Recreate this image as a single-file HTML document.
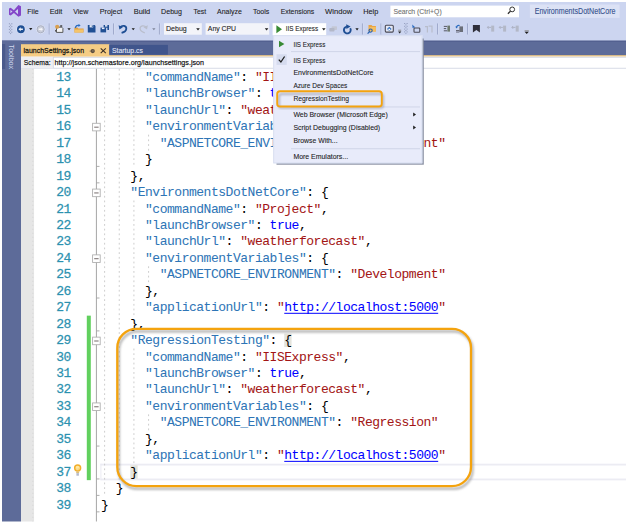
<!DOCTYPE html>
<html><head><meta charset="utf-8"><style>
html,body{margin:0;padding:0;background:#fff;width:628px;height:524px;overflow:hidden}
svg{display:block}
</style></head><body>
<svg width="628" height="524" viewBox="0 0 628 524">
<rect x="2" y="2" width="624" height="39" fill="#CCD5F0"/>
<path fill-rule="evenodd" d="M9 8.6 L10.7 7.8 L13.9 10.3 L18.4 5.1 L21 6.3 V15.6 L18.4 16.8 L13.9 12.9 L10.7 15.5 L9 14.7 Z M10.4 9.9 L12.5 11.6 L10.4 13.3 Z M18 8.9 V14.3 L15 11.6 Z" fill="#8447C9"/>
<text x="27.3" y="13.85" font-family="Liberation Sans" font-size="7.7" fill="#1E1E1E" stroke="#1E1E1E" stroke-width="0.18" stroke-opacity="0.6" textLength="11.299999999999999" lengthAdjust="spacingAndGlyphs" >File</text>
<text x="49.7" y="13.85" font-family="Liberation Sans" font-size="7.7" fill="#1E1E1E" stroke="#1E1E1E" stroke-width="0.18" stroke-opacity="0.6" textLength="12.6" lengthAdjust="spacingAndGlyphs" >Edit</text>
<text x="73.2" y="13.85" font-family="Liberation Sans" font-size="7.7" fill="#1E1E1E" stroke="#1E1E1E" stroke-width="0.18" stroke-opacity="0.6" textLength="15.1" lengthAdjust="spacingAndGlyphs" >View</text>
<text x="99.7" y="13.85" font-family="Liberation Sans" font-size="7.7" fill="#1E1E1E" stroke="#1E1E1E" stroke-width="0.18" stroke-opacity="0.6" textLength="22.6" lengthAdjust="spacingAndGlyphs" >Project</text>
<text x="133.7" y="13.85" font-family="Liberation Sans" font-size="7.7" fill="#1E1E1E" stroke="#1E1E1E" stroke-width="0.18" stroke-opacity="0.6" textLength="16.6" lengthAdjust="spacingAndGlyphs" >Build</text>
<text x="161.1" y="13.85" font-family="Liberation Sans" font-size="7.7" fill="#1E1E1E" stroke="#1E1E1E" stroke-width="0.18" stroke-opacity="0.6" textLength="20.900000000000002" lengthAdjust="spacingAndGlyphs" >Debug</text>
<text x="193.6" y="13.85" font-family="Liberation Sans" font-size="7.7" fill="#1E1E1E" stroke="#1E1E1E" stroke-width="0.18" stroke-opacity="0.6" textLength="12.6" lengthAdjust="spacingAndGlyphs" >Test</text>
<text x="217.0" y="13.85" font-family="Liberation Sans" font-size="7.7" fill="#1E1E1E" stroke="#1E1E1E" stroke-width="0.18" stroke-opacity="0.6" textLength="24.8" lengthAdjust="spacingAndGlyphs" >Analyze</text>
<text x="252.89999999999998" y="13.85" font-family="Liberation Sans" font-size="7.7" fill="#1E1E1E" stroke="#1E1E1E" stroke-width="0.18" stroke-opacity="0.6" textLength="16.400000000000002" lengthAdjust="spacingAndGlyphs" >Tools</text>
<text x="280.7" y="13.85" font-family="Liberation Sans" font-size="7.7" fill="#1E1E1E" stroke="#1E1E1E" stroke-width="0.18" stroke-opacity="0.6" textLength="33.6" lengthAdjust="spacingAndGlyphs" >Extensions</text>
<text x="325.0" y="13.85" font-family="Liberation Sans" font-size="7.7" fill="#1E1E1E" stroke="#1E1E1E" stroke-width="0.18" stroke-opacity="0.6" textLength="27.3" lengthAdjust="spacingAndGlyphs" >Window</text>
<text x="363.2" y="13.85" font-family="Liberation Sans" font-size="7.7" fill="#1E1E1E" stroke="#1E1E1E" stroke-width="0.18" stroke-opacity="0.6" textLength="15.1" lengthAdjust="spacingAndGlyphs" >Help</text>
<rect x="390.4" y="5.6" width="128.6" height="11.7" fill="#FFFFFF"/>
<text x="393.4" y="13.9" font-family="Liberation Sans" font-size="7.6" fill="#717171" stroke="#717171" stroke-width="0.18" stroke-opacity="0.6" textLength="48.3" lengthAdjust="spacingAndGlyphs" >Search (Ctrl+Q)</text>
<circle cx="512.2" cy="9.4" r="2.4" fill="none" stroke="#2A2A2A" stroke-width="0.95"/><path d="M510.5 11.1 L507.9 13.8" stroke="#2A2A2A" stroke-width="1.3"/>
<rect x="529.9" y="4.5" width="89.7" height="13.4" fill="#DCE2F5"/>
<text x="534.7" y="13.8" font-family="Liberation Sans" font-size="8.2" fill="#35508C" stroke="#35508C" stroke-width="0.18" stroke-opacity="0.6" textLength="80.8" lengthAdjust="spacingAndGlyphs" >EnvironmentsDotNetCore</text>
<rect x="8.9" y="23.3" width="1" height="1" fill="#8C96B8"/><rect x="11.3" y="23.3" width="1" height="1" fill="#8C96B8"/>
<rect x="10.1" y="24.7" width="1" height="1" fill="#8C96B8"/>
<rect x="8.9" y="26.099999999999998" width="1" height="1" fill="#8C96B8"/><rect x="11.3" y="26.099999999999998" width="1" height="1" fill="#8C96B8"/>
<rect x="10.1" y="27.499999999999996" width="1" height="1" fill="#8C96B8"/>
<rect x="8.9" y="28.899999999999995" width="1" height="1" fill="#8C96B8"/><rect x="11.3" y="28.899999999999995" width="1" height="1" fill="#8C96B8"/>
<rect x="10.1" y="30.299999999999994" width="1" height="1" fill="#8C96B8"/>
<rect x="8.9" y="31.699999999999992" width="1" height="1" fill="#8C96B8"/><rect x="11.3" y="31.699999999999992" width="1" height="1" fill="#8C96B8"/>
<rect x="10.1" y="33.099999999999994" width="1" height="1" fill="#8C96B8"/>
<circle cx="20.9" cy="29.25" r="4.6" fill="#F2F4FC" fill-opacity="0.55"/><circle cx="20.9" cy="29.25" r="3.9" fill="#1F4F94"/><path d="M18.4 29.25 L20.7 27.3 V31.2 Z M20.6 28.4 h2.3 v1.7 h-2.3z" fill="#fff" fill-opacity="0.92"/>
<path d="M29.1 28.1 h3.3 l-1.65 2.1 z" fill="#1E1E1E"/>
<circle cx="40.65" cy="29.25" r="4.6" fill="#F2F4FC" fill-opacity="0.5"/><circle cx="40.65" cy="29.25" r="3.6" fill="#C9CDDA" stroke="#A6ABBC" stroke-width="0.9"/><path d="M43 29.25 L40.8 27.4 V31.1 Z M40.9 28.5 h-2.2 v1.5 h2.2z" fill="#fff" fill-opacity="0.8"/>
<rect x="48.75" y="23.4" width="0.9" height="11.100000000000001" fill="#98A3C6"/><rect x="49.650000000000006" y="23.4" width="0.6" height="11.100000000000001" fill="#E3E8F8" fill-opacity="0.6"/>
<path d="M56.5 27.2 h5.2 l1.2 1.2 v4 h-6.4 z" fill="#F4F4F4" stroke="#4A4A4A" stroke-width="0.9"/><circle cx="57.2" cy="26.8" r="2.1" fill="#D9A050"/><rect x="60.2" y="25.2" width="2" height="1.6" fill="#4A4A4A"/><rect x="55" y="30" width="1.8" height="1.6" fill="#5A5A5A"/>
<path d="M67.4 28.2 h3.3 l-1.65 2.1 z" fill="#1E1E1E"/>
<path d="M74.4 27.6 h3 l1 1 h5.2 v3.9 h-9.2 z" fill="#E0A040"/><path d="M74.8 29.6 h8.6 l-0.4 2.9 h-8.6 z" fill="#F4C46A"/><path d="M75.4 28 C75.6 25.6 77.5 25 79.3 25.4" fill="none" stroke="#2A6BC0" stroke-width="1.3"/><path d="M78.6 24 L80.6 25.5 L78.4 26.9 Z" fill="#2A6BC0"/>
<path d="M87.8 25.1 h6.9 l0.8 0.8 v6.5 h-7.7 z" fill="#1F4F94"/><rect x="89.6" y="25.1" width="3.6" height="2.3" fill="#E6EAF7"/><rect x="91.8" y="25.4" width="0.9" height="1.6" fill="#1F4F94"/>
<path d="M103.6 25.1 h5.4 v4.9 h-1.6 v-2.2 h-3.8 z" fill="#1F4F94"/><rect x="105" y="25.1" width="2.4" height="1.5" fill="#E6EAF7"/><path d="M100.5 27.6 h5.6 v4.8 h-5.6 z" fill="#1F4F94"/><rect x="101.9" y="27.6" width="2.6" height="1.5" fill="#E6EAF7"/>
<rect x="113.14999999999999" y="23.4" width="0.9" height="11.100000000000001" fill="#98A3C6"/><rect x="114.05" y="23.4" width="0.6" height="11.100000000000001" fill="#E3E8F8" fill-opacity="0.6"/>
<path d="M120.2 27.3 C122 25 126.6 25.4 126.3 28.8 C126.1 31 123.8 32.2 121.6 32.8" fill="none" stroke="#1F4F94" stroke-width="1.8"/><path d="M118.6 25.2 L119.4 29.4 L122.9 27.2 Z" fill="#1F4F94"/>
<path d="M131.6 28.2 h3.3 l-1.65 2.1 z" fill="#1E1E1E"/>
<path d="M146.2 27.3 C144.4 25 139.8 25.4 140.1 28.8 C140.3 31 142.6 32.2 144.8 32.8" fill="none" stroke="#B9BECC" stroke-width="1.3"/><path d="M147.8 25.2 L147 29.4 L143.5 27.2 Z" fill="#B9BECC"/>
<path d="M152.2 28.2 h3.3 l-1.65 2.1 z" fill="#7E859A"/>
<rect x="158.95000000000002" y="23.4" width="0.9" height="11.100000000000001" fill="#98A3C6"/><rect x="159.85" y="23.4" width="0.6" height="11.100000000000001" fill="#E3E8F8" fill-opacity="0.6"/>
<rect x="164" y="23.2" width="37.8" height="11.5" fill="#F3F4F9"/>
<text x="166" y="31.1" font-family="Liberation Sans" font-size="7.4" fill="#1E1E1E" stroke="#1E1E1E" stroke-width="0.18" stroke-opacity="0.6" textLength="20.8" lengthAdjust="spacingAndGlyphs" >Debug</text>
<path d="M196.2 28.2 h3.6 l-1.8 2.2 z" fill="#1E1E1E"/>
<rect x="205.6" y="23.2" width="63.6" height="11.5" fill="#F3F4F9"/>
<text x="207.8" y="31.1" font-family="Liberation Sans" font-size="7.4" fill="#1E1E1E" stroke="#1E1E1E" stroke-width="0.18" stroke-opacity="0.6" textLength="28.3" lengthAdjust="spacingAndGlyphs" >Any CPU</text>
<path d="M264.8 28.2 h3.6 l-1.8 2.2 z" fill="#1E1E1E"/>
<rect x="272.6" y="23.2" width="53.6" height="12" fill="#FFFFFF"/>
<path d="M276.4 25.3 L282 29.3 L276.4 33.3 Z" fill="#388A34"/>
<text x="285.8" y="31.1" font-family="Liberation Sans" font-size="7.4" fill="#1E1E1E" stroke="#1E1E1E" stroke-width="0.18" stroke-opacity="0.6" textLength="32.4" lengthAdjust="spacingAndGlyphs" >IIS Express</text>
<path d="M322 28.2 h3.6 l-1.8 2.2 z" fill="#1E1E1E"/>
<rect x="331.6" y="26.3" width="5.4" height="3.8" rx="0.8" fill="#C3C7D4"/><rect x="329.3" y="28" width="5.2" height="3.6" rx="0.8" fill="#B3B8C8"/>
<path d="M350.2 28.2 A3.4 3.4 0 1 1 347.2 26.6" fill="none" stroke="#1F4F94" stroke-width="1.9"/><path d="M346.2 24.2 L350.6 26.4 L346.4 28.9 Z" fill="#1F4F94"/>
<path d="M355.4 28.3 h3.3 l-1.65 2.1 z" fill="#1E1E1E"/>
<rect x="361.95" y="23.4" width="0.9" height="11.100000000000001" fill="#98A3C6"/><rect x="362.84999999999997" y="23.4" width="0.6" height="11.100000000000001" fill="#E3E8F8" fill-opacity="0.6"/>
<path d="M368.5 25 h3 l1 1 h3.4 v5.5 h-7.4 z" fill="#E9A544"/><path d="M369.5 27 h6.4 v4.5 h-6.4z" fill="#F3BE63"/><circle cx="370.6" cy="30.6" r="1.6" fill="none" stroke="#2460B0" stroke-width="1.1"/><path d="M369.5 31.8 L367.6 33.6" stroke="#2460B0" stroke-width="1.2"/>
<rect x="380.55" y="23.4" width="0.9" height="11.100000000000001" fill="#98A3C6"/><rect x="381.45" y="23.4" width="0.6" height="11.100000000000001" fill="#E3E8F8" fill-opacity="0.6"/>
<rect x="385.3" y="25.3" width="8" height="6.8" rx="1" fill="#E4E8F5" stroke="#4A4A55" stroke-width="1.1"/><path d="M389.3 26.8 L391.6 29 L389.3 31 L387 29 Z" fill="#2A6BC0"/><rect x="388.4" y="28.7" width="1.8" height="1.6" fill="#fff"/>
<rect x="398.2" y="29.7" width="3" height="1" fill="#8A8A8A"/><path d="M398.1 31.4 h3.2 l-1.6 2 z" fill="#1E1E1E"/>
<rect x="404.2" y="23" width="1" height="1" fill="#8C96B8"/><rect x="406.59999999999997" y="23" width="1" height="1" fill="#8C96B8"/>
<rect x="405.4" y="24.4" width="1" height="1" fill="#8C96B8"/>
<rect x="404.2" y="25.799999999999997" width="1" height="1" fill="#8C96B8"/><rect x="406.59999999999997" y="25.799999999999997" width="1" height="1" fill="#8C96B8"/>
<rect x="405.4" y="27.199999999999996" width="1" height="1" fill="#8C96B8"/>
<rect x="404.2" y="28.599999999999994" width="1" height="1" fill="#8C96B8"/><rect x="406.59999999999997" y="28.599999999999994" width="1" height="1" fill="#8C96B8"/>
<rect x="405.4" y="29.999999999999993" width="1" height="1" fill="#8C96B8"/>
<rect x="404.2" y="31.39999999999999" width="1" height="1" fill="#8C96B8"/><rect x="406.59999999999997" y="31.39999999999999" width="1" height="1" fill="#8C96B8"/>
<rect x="405.4" y="32.79999999999999" width="1" height="1" fill="#8C96B8"/>
<path d="M412.2 24.4 L415.2 27.2 L412.6 28 Z" fill="#2A6BC0"/><rect x="414" y="28" width="5.8" height="4.2" rx="0.8" fill="none" stroke="#4A4A55" stroke-width="1.1"/>
<path d="M425 26 h3 v6.4 h-1.2 v-5.2 h-1.8z M428.6 25.5 h4 v7 h-1.2 v-5.8 h-2.8z" fill="#B8BDCB"/>
<rect x="437.15000000000003" y="23.4" width="0.9" height="11.100000000000001" fill="#98A3C6"/><rect x="438.05" y="23.4" width="0.6" height="11.100000000000001" fill="#E3E8F8" fill-opacity="0.6"/>
<path d="M443.8 26.4 h3.4 M443.8 28.6 h2.4 M443.8 30.8 h3.4" stroke="#4A4A55" stroke-width="0.9"/><rect x="447.4" y="25.6" width="2.6" height="6" fill="#6E7A6E"/>
<path d="M456.6 27.4 C456.4 25.8 458 25 459.6 25.6" fill="none" stroke="#2A6BC0" stroke-width="1.2"/><path d="M455.3 26.4 L457.9 26.8 L456.4 28.6 Z" fill="#2A6BC0"/><rect x="459.4" y="26.4" width="3.6" height="5.6" fill="#6A6E78"/><path d="M456 30.5 h3.4 M456 32 h3.4" stroke="#4A4A55" stroke-width="0.8"/>
<rect x="467.15000000000003" y="23.4" width="0.9" height="11.100000000000001" fill="#98A3C6"/><rect x="468.05" y="23.4" width="0.6" height="11.100000000000001" fill="#E3E8F8" fill-opacity="0.6"/>
<path d="M472.9 24.9 h7 v7.6 l-3.5 -2.6 l-3.5 2.6z" fill="#2F2F3A"/>
<path d="M487.4 27.4 h3.6 M488.59999999999997 26 l-1.2 1.4 l1.2 1.4" stroke="#A9AEBF" stroke-width="0.9" fill="none"/><rect x="491.2" y="25.6" width="3" height="6" fill="#B3B8C7"/>
<path d="M499.3 27.4 h3.6 M500.5 26 l-1.2 1.4 l1.2 1.4" stroke="#A9AEBF" stroke-width="0.9" fill="none"/><rect x="503.1" y="25.6" width="3" height="6" fill="#B3B8C7"/>
<path d="M511.9 27.4 h3.6 M513.1 26 l-1.2 1.4 l1.2 1.4" stroke="#A9AEBF" stroke-width="0.9" fill="none"/><rect x="515.6999999999999" y="25.6" width="3" height="6" fill="#B3B8C7"/>
<rect x="524.6" y="30.3" width="4.2" height="1" fill="#8A8A8A"/><path d="M524.6 31.8 h4.2 l-2.1 2.3 z" fill="#1E1E1E"/>
<rect x="2" y="40.7" width="624" height="15.5" fill="#5D6B99"/>
<rect x="2" y="40.7" width="624" height="0.8" fill="#4A5787"/>
<rect x="21" y="55.2" width="605" height="1.5" fill="#F5CC84"/>
<rect x="21" y="44.2" width="88.3" height="12.4" fill="#F5CC84"/>
<text x="23.5" y="52.7" font-family="Liberation Sans" font-size="7.3" fill="#101010" stroke="#101010" stroke-width="0.28" stroke-opacity="0.8" textLength="60.6" lengthAdjust="spacingAndGlyphs" >launchSettings.json</text>
<circle cx="92.7" cy="51.1" r="2.15" fill="#5A4C3E"/><circle cx="92.9" cy="50.9" r="0.8" fill="#8A7A62"/><rect x="89.6" y="50.7" width="1.6" height="0.8" fill="#7A6A58"/>
<path d="M100.7 48.3 L105.8 53.2 M105.8 48.3 L100.7 53.2" stroke="#3A3028" stroke-width="1.05"/>
<rect x="109.3" y="44.9" width="58.6" height="9.8" fill="#40558C"/>
<text x="112" y="52.6" font-family="Liberation Sans" font-size="7.5" fill="#E4E9F7" stroke="#E4E9F7" stroke-width="0.18" stroke-opacity="0.6" textLength="30.9" lengthAdjust="spacingAndGlyphs" >Startup.cs</text>
<rect x="2" y="40.7" width="19" height="481" fill="#5D6B99"/>
<rect x="2" y="44" width="3.2" height="25" fill="#4A5A8C"/>
<text transform="translate(9.2,44.6) rotate(90)" font-family="Liberation Sans" font-size="8" fill="#D3DAEE" textLength="24.5" lengthAdjust="spacingAndGlyphs" y="0">Toolbox</text>
<rect x="21" y="56.7" width="605" height="11.6" fill="#FCFCFD"/>
<rect x="21" y="56.7" width="32" height="11.6" fill="#EEEEF2"/>
<rect x="53.3" y="57.3" width="580" height="10.9" fill="#FFFFFF" stroke="#D0D4E2" stroke-width="0.8"/>
<rect x="21" y="68.1" width="605" height="0.7" fill="#D5D9E6"/>
<text x="23.8" y="65.25" font-family="Liberation Sans" font-size="7.8" fill="#101010" stroke="#101010" stroke-width="0.25" stroke-opacity="0.8" textLength="26.8" lengthAdjust="spacingAndGlyphs" >Schema:</text>
<text x="54.6" y="65.25" font-family="Liberation Sans" font-size="7.8" fill="#101010" stroke="#101010" stroke-width="0.25" stroke-opacity="0.8" textLength="149.5" lengthAdjust="spacingAndGlyphs" >http://json.schemastore.org/launchsettings.json</text>
<rect x="21" y="68.8" width="13.2" height="452.90000000000003" fill="#E6E6E6"/>
<rect x="34.2" y="68.8" width="591.8" height="452.90000000000003" fill="#FFFFFF"/>
<line x1="32.8" y1="68.8" x2="32.8" y2="521.7" stroke="#D2D2D2" stroke-width="0.8" stroke-dasharray="1 3"/>
<rect x="100.4" y="463.69999999999993" width="526" height="1.8" fill="#ECECF3"/><rect x="100.4" y="478.5499999999999" width="526" height="1.8" fill="#ECECF3"/><rect x="100.4" y="463.69999999999993" width="1" height="16.45" fill="#ECECF3"/>
<rect x="86.8" y="315.65" width="4" height="164.5" fill="#61D05E"/>
<line x1="96.4" y1="68.8" x2="96.4" y2="521.7" stroke="#A5A5A5" stroke-width="1"/>
<rect x="92.6" y="123.27499999999999" width="7.6" height="7.6" fill="#FFFFFF" stroke="#ADADAD" stroke-width="0.85"/>
<rect x="94.2" y="126.725" width="4.4" height="0.85" fill="#5E5252"/>
<rect x="92.6" y="189.075" width="7.6" height="7.6" fill="#FFFFFF" stroke="#ADADAD" stroke-width="0.85"/>
<rect x="94.2" y="192.525" width="4.4" height="0.85" fill="#5E5252"/>
<rect x="92.6" y="254.87499999999997" width="7.6" height="7.6" fill="#FFFFFF" stroke="#ADADAD" stroke-width="0.85"/>
<rect x="94.2" y="258.325" width="4.4" height="0.85" fill="#5E5252"/>
<rect x="92.6" y="337.12500000000006" width="7.6" height="7.6" fill="#FFFFFF" stroke="#ADADAD" stroke-width="0.85"/>
<rect x="94.2" y="340.57500000000005" width="4.4" height="0.85" fill="#5E5252"/>
<rect x="92.6" y="402.925" width="7.6" height="7.6" fill="#FFFFFF" stroke="#ADADAD" stroke-width="0.85"/>
<rect x="94.2" y="406.375" width="4.4" height="0.85" fill="#5E5252"/>
<line x1="96.4" y1="166.4" x2="99.5" y2="166.4" stroke="#A5A5A5" stroke-width="0.9"/>
<line x1="96.4" y1="182.85" x2="99.5" y2="182.85" stroke="#A5A5A5" stroke-width="0.9"/>
<line x1="96.4" y1="298.0" x2="99.5" y2="298.0" stroke="#A5A5A5" stroke-width="0.9"/>
<line x1="96.4" y1="330.9" x2="99.5" y2="330.9" stroke="#A5A5A5" stroke-width="0.9"/>
<line x1="96.4" y1="446.04999999999995" x2="99.5" y2="446.04999999999995" stroke="#A5A5A5" stroke-width="0.9"/>
<line x1="96.4" y1="478.94999999999993" x2="99.5" y2="478.94999999999993" stroke="#A5A5A5" stroke-width="0.9"/>
<line x1="96.4" y1="495.4" x2="99.5" y2="495.4" stroke="#A5A5A5" stroke-width="0.9"/>
<line x1="96.4" y1="511.8500000000001" x2="99.5" y2="511.8500000000001" stroke="#A5A5A5" stroke-width="0.9"/>
<line x1="104.6" y1="68.9" x2="104.6" y2="496.6" stroke="#C4C4C4" stroke-width="0.85" stroke-dasharray="1.8 2.9"/>
<line x1="119.25999999999999" y1="68.9" x2="119.25999999999999" y2="480.15" stroke="#C4C4C4" stroke-width="0.85" stroke-dasharray="1.8 2.9"/>
<line x1="133.92" y1="68.9" x2="133.92" y2="167.6" stroke="#C4C4C4" stroke-width="0.85" stroke-dasharray="1.8 2.9"/>
<line x1="133.92" y1="200.5" x2="133.92" y2="315.65" stroke="#C4C4C4" stroke-width="0.85" stroke-dasharray="1.8 2.9"/>
<line x1="133.92" y1="348.54999999999995" x2="133.92" y2="463.69999999999993" stroke="#C4C4C4" stroke-width="0.85" stroke-dasharray="1.8 2.9"/>
<line x1="148.58" y1="134.7" x2="148.58" y2="151.15" stroke="#C4C4C4" stroke-width="0.85" stroke-dasharray="1.8 2.9"/>
<line x1="148.58" y1="266.29999999999995" x2="148.58" y2="282.75" stroke="#C4C4C4" stroke-width="0.85" stroke-dasharray="1.8 2.9"/>
<line x1="148.58" y1="414.35" x2="148.58" y2="430.79999999999995" stroke="#C4C4C4" stroke-width="0.85" stroke-dasharray="1.8 2.9"/>
<rect x="284.25" y="333.6" width="7.33" height="13.45" fill="#E4E4DC"/>
<rect x="130.32" y="465.19999999999993" width="7.33" height="13.45" fill="#E4E4DC"/>
<text x="56.20 63.53" y="80.90" font-family="Liberation Mono" font-size="13" fill="#2B91AF" stroke="#2B91AF" stroke-width="0.32" stroke-opacity="0.75">13</text>
<text x="144.98 152.31 159.64 166.97 174.30 181.63 188.96 196.29 203.62 210.95 218.28 225.61 232.94" y="80.90" font-family="Liberation Mono" font-size="13" fill="#2E75B6" stroke="#2E75B6" stroke-width="0.08" stroke-opacity="0.7" xml:space="preserve">"commandName"</text>
<text x="240.27 247.60" y="80.90" font-family="Liberation Mono" font-size="13" fill="#000000" stroke="#000000" stroke-width="0.08" stroke-opacity="0.7" xml:space="preserve">: </text>
<text x="254.93 262.26 269.59 276.92 284.25 291.58 298.91 306.24 313.57 320.90 328.23 335.56" y="80.90" font-family="Liberation Mono" font-size="13" fill="#A31515" stroke="#A31515" stroke-width="0.08" stroke-opacity="0.7" xml:space="preserve">"IISExpress"</text>
<text x="342.89" y="80.90" font-family="Liberation Mono" font-size="13" fill="#000000" stroke="#000000" stroke-width="0.08" stroke-opacity="0.7" xml:space="preserve">,</text>
<text x="56.20 63.53" y="97.35" font-family="Liberation Mono" font-size="13" fill="#2B91AF" stroke="#2B91AF" stroke-width="0.32" stroke-opacity="0.75">14</text>
<text x="144.98 152.31 159.64 166.97 174.30 181.63 188.96 196.29 203.62 210.95 218.28 225.61 232.94 240.27 247.60" y="97.35" font-family="Liberation Mono" font-size="13" fill="#2E75B6" stroke="#2E75B6" stroke-width="0.08" stroke-opacity="0.7" xml:space="preserve">"launchBrowser"</text>
<text x="254.93 262.26" y="97.35" font-family="Liberation Mono" font-size="13" fill="#000000" stroke="#000000" stroke-width="0.08" stroke-opacity="0.7" xml:space="preserve">: </text>
<text x="269.59 276.92 284.25 291.58" y="97.35" font-family="Liberation Mono" font-size="13" fill="#0000FF" stroke="#0000FF" stroke-width="0.08" stroke-opacity="0.7" xml:space="preserve">true</text>
<text x="298.91" y="97.35" font-family="Liberation Mono" font-size="13" fill="#000000" stroke="#000000" stroke-width="0.08" stroke-opacity="0.7" xml:space="preserve">,</text>
<text x="56.20 63.53" y="113.80" font-family="Liberation Mono" font-size="13" fill="#2B91AF" stroke="#2B91AF" stroke-width="0.32" stroke-opacity="0.75">15</text>
<text x="144.98 152.31 159.64 166.97 174.30 181.63 188.96 196.29 203.62 210.95 218.28" y="113.80" font-family="Liberation Mono" font-size="13" fill="#2E75B6" stroke="#2E75B6" stroke-width="0.08" stroke-opacity="0.7" xml:space="preserve">"launchUrl"</text>
<text x="225.61 232.94" y="113.80" font-family="Liberation Mono" font-size="13" fill="#000000" stroke="#000000" stroke-width="0.08" stroke-opacity="0.7" xml:space="preserve">: </text>
<text x="240.27 247.60 254.93 262.26 269.59 276.92 284.25 291.58 298.91 306.24 313.57 320.90 328.23 335.56 342.89 350.22 357.55" y="113.80" font-family="Liberation Mono" font-size="13" fill="#A31515" stroke="#A31515" stroke-width="0.08" stroke-opacity="0.7" xml:space="preserve">"weatherforecast"</text>
<text x="364.88" y="113.80" font-family="Liberation Mono" font-size="13" fill="#000000" stroke="#000000" stroke-width="0.08" stroke-opacity="0.7" xml:space="preserve">,</text>
<text x="56.20 63.53" y="130.25" font-family="Liberation Mono" font-size="13" fill="#2B91AF" stroke="#2B91AF" stroke-width="0.32" stroke-opacity="0.75">16</text>
<text x="144.98 152.31 159.64 166.97 174.30 181.63 188.96 196.29 203.62 210.95 218.28 225.61 232.94 240.27 247.60 254.93 262.26 269.59 276.92 284.25 291.58 298.91" y="130.25" font-family="Liberation Mono" font-size="13" fill="#2E75B6" stroke="#2E75B6" stroke-width="0.08" stroke-opacity="0.7" xml:space="preserve">"environmentVariables"</text>
<text x="306.24 313.57 320.90" y="130.25" font-family="Liberation Mono" font-size="13" fill="#000000" stroke="#000000" stroke-width="0.08" stroke-opacity="0.7" xml:space="preserve">: {</text>
<text x="56.20 63.53" y="146.70" font-family="Liberation Mono" font-size="13" fill="#2B91AF" stroke="#2B91AF" stroke-width="0.32" stroke-opacity="0.75">17</text>
<text x="159.64 166.97 174.30 181.63 188.96 196.29 203.62 210.95 218.28 225.61 232.94 240.27 247.60 254.93 262.26 269.59 276.92 284.25 291.58 298.91 306.24 313.57 320.90 328.23" y="146.70" font-family="Liberation Mono" font-size="13" fill="#2E75B6" stroke="#2E75B6" stroke-width="0.08" stroke-opacity="0.7" xml:space="preserve">"ASPNETCORE_ENVIRONMENT"</text>
<text x="335.56 342.89" y="146.70" font-family="Liberation Mono" font-size="13" fill="#000000" stroke="#000000" stroke-width="0.08" stroke-opacity="0.7" xml:space="preserve">: </text>
<text x="350.22 357.55 364.88 372.21 379.54 386.87 394.20 401.53 408.86 416.19 423.52 430.85 438.18" y="146.70" font-family="Liberation Mono" font-size="13" fill="#A31515" stroke="#A31515" stroke-width="0.08" stroke-opacity="0.7" xml:space="preserve">"Development"</text>
<text x="56.20 63.53" y="163.15" font-family="Liberation Mono" font-size="13" fill="#2B91AF" stroke="#2B91AF" stroke-width="0.32" stroke-opacity="0.75">18</text>
<text x="144.98" y="163.15" font-family="Liberation Mono" font-size="13" fill="#000000" stroke="#000000" stroke-width="0.08" stroke-opacity="0.7" xml:space="preserve">}</text>
<text x="56.20 63.53" y="179.60" font-family="Liberation Mono" font-size="13" fill="#2B91AF" stroke="#2B91AF" stroke-width="0.32" stroke-opacity="0.75">19</text>
<text x="130.32 137.65" y="179.60" font-family="Liberation Mono" font-size="13" fill="#000000" stroke="#000000" stroke-width="0.08" stroke-opacity="0.7" xml:space="preserve">},</text>
<text x="56.20 63.53" y="196.05" font-family="Liberation Mono" font-size="13" fill="#2B91AF" stroke="#2B91AF" stroke-width="0.32" stroke-opacity="0.75">20</text>
<text x="130.32 137.65 144.98 152.31 159.64 166.97 174.30 181.63 188.96 196.29 203.62 210.95 218.28 225.61 232.94 240.27 247.60 254.93 262.26 269.59 276.92 284.25 291.58 298.91" y="196.05" font-family="Liberation Mono" font-size="13" fill="#2E75B6" stroke="#2E75B6" stroke-width="0.08" stroke-opacity="0.7" xml:space="preserve">"EnvironmentsDotNetCore"</text>
<text x="306.24 313.57 320.90" y="196.05" font-family="Liberation Mono" font-size="13" fill="#000000" stroke="#000000" stroke-width="0.08" stroke-opacity="0.7" xml:space="preserve">: {</text>
<text x="56.20 63.53" y="212.50" font-family="Liberation Mono" font-size="13" fill="#2B91AF" stroke="#2B91AF" stroke-width="0.32" stroke-opacity="0.75">21</text>
<text x="144.98 152.31 159.64 166.97 174.30 181.63 188.96 196.29 203.62 210.95 218.28 225.61 232.94" y="212.50" font-family="Liberation Mono" font-size="13" fill="#2E75B6" stroke="#2E75B6" stroke-width="0.08" stroke-opacity="0.7" xml:space="preserve">"commandName"</text>
<text x="240.27 247.60" y="212.50" font-family="Liberation Mono" font-size="13" fill="#000000" stroke="#000000" stroke-width="0.08" stroke-opacity="0.7" xml:space="preserve">: </text>
<text x="254.93 262.26 269.59 276.92 284.25 291.58 298.91 306.24 313.57" y="212.50" font-family="Liberation Mono" font-size="13" fill="#A31515" stroke="#A31515" stroke-width="0.08" stroke-opacity="0.7" xml:space="preserve">"Project"</text>
<text x="320.90" y="212.50" font-family="Liberation Mono" font-size="13" fill="#000000" stroke="#000000" stroke-width="0.08" stroke-opacity="0.7" xml:space="preserve">,</text>
<text x="56.20 63.53" y="228.95" font-family="Liberation Mono" font-size="13" fill="#2B91AF" stroke="#2B91AF" stroke-width="0.32" stroke-opacity="0.75">22</text>
<text x="144.98 152.31 159.64 166.97 174.30 181.63 188.96 196.29 203.62 210.95 218.28 225.61 232.94 240.27 247.60" y="228.95" font-family="Liberation Mono" font-size="13" fill="#2E75B6" stroke="#2E75B6" stroke-width="0.08" stroke-opacity="0.7" xml:space="preserve">"launchBrowser"</text>
<text x="254.93 262.26" y="228.95" font-family="Liberation Mono" font-size="13" fill="#000000" stroke="#000000" stroke-width="0.08" stroke-opacity="0.7" xml:space="preserve">: </text>
<text x="269.59 276.92 284.25 291.58" y="228.95" font-family="Liberation Mono" font-size="13" fill="#0000FF" stroke="#0000FF" stroke-width="0.08" stroke-opacity="0.7" xml:space="preserve">true</text>
<text x="298.91" y="228.95" font-family="Liberation Mono" font-size="13" fill="#000000" stroke="#000000" stroke-width="0.08" stroke-opacity="0.7" xml:space="preserve">,</text>
<text x="56.20 63.53" y="245.40" font-family="Liberation Mono" font-size="13" fill="#2B91AF" stroke="#2B91AF" stroke-width="0.32" stroke-opacity="0.75">23</text>
<text x="144.98 152.31 159.64 166.97 174.30 181.63 188.96 196.29 203.62 210.95 218.28" y="245.40" font-family="Liberation Mono" font-size="13" fill="#2E75B6" stroke="#2E75B6" stroke-width="0.08" stroke-opacity="0.7" xml:space="preserve">"launchUrl"</text>
<text x="225.61 232.94" y="245.40" font-family="Liberation Mono" font-size="13" fill="#000000" stroke="#000000" stroke-width="0.08" stroke-opacity="0.7" xml:space="preserve">: </text>
<text x="240.27 247.60 254.93 262.26 269.59 276.92 284.25 291.58 298.91 306.24 313.57 320.90 328.23 335.56 342.89 350.22 357.55" y="245.40" font-family="Liberation Mono" font-size="13" fill="#A31515" stroke="#A31515" stroke-width="0.08" stroke-opacity="0.7" xml:space="preserve">"weatherforecast"</text>
<text x="364.88" y="245.40" font-family="Liberation Mono" font-size="13" fill="#000000" stroke="#000000" stroke-width="0.08" stroke-opacity="0.7" xml:space="preserve">,</text>
<text x="56.20 63.53" y="261.85" font-family="Liberation Mono" font-size="13" fill="#2B91AF" stroke="#2B91AF" stroke-width="0.32" stroke-opacity="0.75">24</text>
<text x="144.98 152.31 159.64 166.97 174.30 181.63 188.96 196.29 203.62 210.95 218.28 225.61 232.94 240.27 247.60 254.93 262.26 269.59 276.92 284.25 291.58 298.91" y="261.85" font-family="Liberation Mono" font-size="13" fill="#2E75B6" stroke="#2E75B6" stroke-width="0.08" stroke-opacity="0.7" xml:space="preserve">"environmentVariables"</text>
<text x="306.24 313.57 320.90" y="261.85" font-family="Liberation Mono" font-size="13" fill="#000000" stroke="#000000" stroke-width="0.08" stroke-opacity="0.7" xml:space="preserve">: {</text>
<text x="56.20 63.53" y="278.30" font-family="Liberation Mono" font-size="13" fill="#2B91AF" stroke="#2B91AF" stroke-width="0.32" stroke-opacity="0.75">25</text>
<text x="159.64 166.97 174.30 181.63 188.96 196.29 203.62 210.95 218.28 225.61 232.94 240.27 247.60 254.93 262.26 269.59 276.92 284.25 291.58 298.91 306.24 313.57 320.90 328.23" y="278.30" font-family="Liberation Mono" font-size="13" fill="#2E75B6" stroke="#2E75B6" stroke-width="0.08" stroke-opacity="0.7" xml:space="preserve">"ASPNETCORE_ENVIRONMENT"</text>
<text x="335.56 342.89" y="278.30" font-family="Liberation Mono" font-size="13" fill="#000000" stroke="#000000" stroke-width="0.08" stroke-opacity="0.7" xml:space="preserve">: </text>
<text x="350.22 357.55 364.88 372.21 379.54 386.87 394.20 401.53 408.86 416.19 423.52 430.85 438.18" y="278.30" font-family="Liberation Mono" font-size="13" fill="#A31515" stroke="#A31515" stroke-width="0.08" stroke-opacity="0.7" xml:space="preserve">"Development"</text>
<text x="56.20 63.53" y="294.75" font-family="Liberation Mono" font-size="13" fill="#2B91AF" stroke="#2B91AF" stroke-width="0.32" stroke-opacity="0.75">26</text>
<text x="144.98 152.31" y="294.75" font-family="Liberation Mono" font-size="13" fill="#000000" stroke="#000000" stroke-width="0.08" stroke-opacity="0.7" xml:space="preserve">},</text>
<text x="56.20 63.53" y="311.20" font-family="Liberation Mono" font-size="13" fill="#2B91AF" stroke="#2B91AF" stroke-width="0.32" stroke-opacity="0.75">27</text>
<text x="144.98 152.31 159.64 166.97 174.30 181.63 188.96 196.29 203.62 210.95 218.28 225.61 232.94 240.27 247.60 254.93" y="311.20" font-family="Liberation Mono" font-size="13" fill="#2E75B6" stroke="#2E75B6" stroke-width="0.08" stroke-opacity="0.7" xml:space="preserve">"applicationUrl"</text>
<text x="262.26 269.59" y="311.20" font-family="Liberation Mono" font-size="13" fill="#000000" stroke="#000000" stroke-width="0.08" stroke-opacity="0.7" xml:space="preserve">: </text>
<text x="276.92" y="311.20" font-family="Liberation Mono" font-size="13" fill="#A31515" stroke="#A31515" stroke-width="0.08" stroke-opacity="0.7" xml:space="preserve">"</text>
<text x="284.25 291.58 298.91 306.24 313.57 320.90 328.23 335.56 342.89 350.22 357.55 364.88 372.21 379.54 386.87 394.20 401.53 408.86 416.19 423.52 430.85" y="311.20" font-family="Liberation Mono" font-size="13" fill="#0000FF" stroke="#0000FF" stroke-width="0.08" stroke-opacity="0.7" xml:space="preserve">http://localhost:5000</text>
<rect x="284.25" y="312.80" width="153.93" height="1" fill="#0000FF"/>
<text x="438.18" y="311.20" font-family="Liberation Mono" font-size="13" fill="#A31515" stroke="#A31515" stroke-width="0.08" stroke-opacity="0.7" xml:space="preserve">"</text>
<text x="56.20 63.53" y="327.65" font-family="Liberation Mono" font-size="13" fill="#2B91AF" stroke="#2B91AF" stroke-width="0.32" stroke-opacity="0.75">28</text>
<text x="130.32 137.65" y="327.65" font-family="Liberation Mono" font-size="13" fill="#000000" stroke="#000000" stroke-width="0.08" stroke-opacity="0.7" xml:space="preserve">},</text>
<text x="56.20 63.53" y="344.10" font-family="Liberation Mono" font-size="13" fill="#2B91AF" stroke="#2B91AF" stroke-width="0.32" stroke-opacity="0.75">29</text>
<text x="130.32 137.65 144.98 152.31 159.64 166.97 174.30 181.63 188.96 196.29 203.62 210.95 218.28 225.61 232.94 240.27 247.60 254.93 262.26" y="344.10" font-family="Liberation Mono" font-size="13" fill="#2E75B6" stroke="#2E75B6" stroke-width="0.08" stroke-opacity="0.7" xml:space="preserve">"RegressionTesting"</text>
<text x="269.59 276.92" y="344.10" font-family="Liberation Mono" font-size="13" fill="#000000" stroke="#000000" stroke-width="0.08" stroke-opacity="0.7" xml:space="preserve">: </text>
<text x="284.25" y="344.10" font-family="Liberation Mono" font-size="13" fill="#000000" stroke="#000000" stroke-width="0.08" stroke-opacity="0.7" xml:space="preserve">{</text>
<text x="56.20 63.53" y="360.55" font-family="Liberation Mono" font-size="13" fill="#2B91AF" stroke="#2B91AF" stroke-width="0.32" stroke-opacity="0.75">30</text>
<text x="144.98 152.31 159.64 166.97 174.30 181.63 188.96 196.29 203.62 210.95 218.28 225.61 232.94" y="360.55" font-family="Liberation Mono" font-size="13" fill="#2E75B6" stroke="#2E75B6" stroke-width="0.08" stroke-opacity="0.7" xml:space="preserve">"commandName"</text>
<text x="240.27 247.60" y="360.55" font-family="Liberation Mono" font-size="13" fill="#000000" stroke="#000000" stroke-width="0.08" stroke-opacity="0.7" xml:space="preserve">: </text>
<text x="254.93 262.26 269.59 276.92 284.25 291.58 298.91 306.24 313.57 320.90 328.23 335.56" y="360.55" font-family="Liberation Mono" font-size="13" fill="#A31515" stroke="#A31515" stroke-width="0.08" stroke-opacity="0.7" xml:space="preserve">"IISExpress"</text>
<text x="342.89" y="360.55" font-family="Liberation Mono" font-size="13" fill="#000000" stroke="#000000" stroke-width="0.08" stroke-opacity="0.7" xml:space="preserve">,</text>
<text x="56.20 63.53" y="377.00" font-family="Liberation Mono" font-size="13" fill="#2B91AF" stroke="#2B91AF" stroke-width="0.32" stroke-opacity="0.75">31</text>
<text x="144.98 152.31 159.64 166.97 174.30 181.63 188.96 196.29 203.62 210.95 218.28 225.61 232.94 240.27 247.60" y="377.00" font-family="Liberation Mono" font-size="13" fill="#2E75B6" stroke="#2E75B6" stroke-width="0.08" stroke-opacity="0.7" xml:space="preserve">"launchBrowser"</text>
<text x="254.93 262.26" y="377.00" font-family="Liberation Mono" font-size="13" fill="#000000" stroke="#000000" stroke-width="0.08" stroke-opacity="0.7" xml:space="preserve">: </text>
<text x="269.59 276.92 284.25 291.58" y="377.00" font-family="Liberation Mono" font-size="13" fill="#0000FF" stroke="#0000FF" stroke-width="0.08" stroke-opacity="0.7" xml:space="preserve">true</text>
<text x="298.91" y="377.00" font-family="Liberation Mono" font-size="13" fill="#000000" stroke="#000000" stroke-width="0.08" stroke-opacity="0.7" xml:space="preserve">,</text>
<text x="56.20 63.53" y="393.45" font-family="Liberation Mono" font-size="13" fill="#2B91AF" stroke="#2B91AF" stroke-width="0.32" stroke-opacity="0.75">32</text>
<text x="144.98 152.31 159.64 166.97 174.30 181.63 188.96 196.29 203.62 210.95 218.28" y="393.45" font-family="Liberation Mono" font-size="13" fill="#2E75B6" stroke="#2E75B6" stroke-width="0.08" stroke-opacity="0.7" xml:space="preserve">"launchUrl"</text>
<text x="225.61 232.94" y="393.45" font-family="Liberation Mono" font-size="13" fill="#000000" stroke="#000000" stroke-width="0.08" stroke-opacity="0.7" xml:space="preserve">: </text>
<text x="240.27 247.60 254.93 262.26 269.59 276.92 284.25 291.58 298.91 306.24 313.57 320.90 328.23 335.56 342.89 350.22 357.55" y="393.45" font-family="Liberation Mono" font-size="13" fill="#A31515" stroke="#A31515" stroke-width="0.08" stroke-opacity="0.7" xml:space="preserve">"weatherforecast"</text>
<text x="364.88" y="393.45" font-family="Liberation Mono" font-size="13" fill="#000000" stroke="#000000" stroke-width="0.08" stroke-opacity="0.7" xml:space="preserve">,</text>
<text x="56.20 63.53" y="409.90" font-family="Liberation Mono" font-size="13" fill="#2B91AF" stroke="#2B91AF" stroke-width="0.32" stroke-opacity="0.75">33</text>
<text x="144.98 152.31 159.64 166.97 174.30 181.63 188.96 196.29 203.62 210.95 218.28 225.61 232.94 240.27 247.60 254.93 262.26 269.59 276.92 284.25 291.58 298.91" y="409.90" font-family="Liberation Mono" font-size="13" fill="#2E75B6" stroke="#2E75B6" stroke-width="0.08" stroke-opacity="0.7" xml:space="preserve">"environmentVariables"</text>
<text x="306.24 313.57 320.90" y="409.90" font-family="Liberation Mono" font-size="13" fill="#000000" stroke="#000000" stroke-width="0.08" stroke-opacity="0.7" xml:space="preserve">: {</text>
<text x="56.20 63.53" y="426.35" font-family="Liberation Mono" font-size="13" fill="#2B91AF" stroke="#2B91AF" stroke-width="0.32" stroke-opacity="0.75">34</text>
<text x="159.64 166.97 174.30 181.63 188.96 196.29 203.62 210.95 218.28 225.61 232.94 240.27 247.60 254.93 262.26 269.59 276.92 284.25 291.58 298.91 306.24 313.57 320.90 328.23" y="426.35" font-family="Liberation Mono" font-size="13" fill="#2E75B6" stroke="#2E75B6" stroke-width="0.08" stroke-opacity="0.7" xml:space="preserve">"ASPNETCORE_ENVIRONMENT"</text>
<text x="335.56 342.89" y="426.35" font-family="Liberation Mono" font-size="13" fill="#000000" stroke="#000000" stroke-width="0.08" stroke-opacity="0.7" xml:space="preserve">: </text>
<text x="350.22 357.55 364.88 372.21 379.54 386.87 394.20 401.53 408.86 416.19 423.52 430.85" y="426.35" font-family="Liberation Mono" font-size="13" fill="#A31515" stroke="#A31515" stroke-width="0.08" stroke-opacity="0.7" xml:space="preserve">"Regression"</text>
<text x="56.20 63.53" y="442.80" font-family="Liberation Mono" font-size="13" fill="#2B91AF" stroke="#2B91AF" stroke-width="0.32" stroke-opacity="0.75">35</text>
<text x="144.98 152.31" y="442.80" font-family="Liberation Mono" font-size="13" fill="#000000" stroke="#000000" stroke-width="0.08" stroke-opacity="0.7" xml:space="preserve">},</text>
<text x="56.20 63.53" y="459.25" font-family="Liberation Mono" font-size="13" fill="#2B91AF" stroke="#2B91AF" stroke-width="0.32" stroke-opacity="0.75">36</text>
<text x="144.98 152.31 159.64 166.97 174.30 181.63 188.96 196.29 203.62 210.95 218.28 225.61 232.94 240.27 247.60 254.93" y="459.25" font-family="Liberation Mono" font-size="13" fill="#2E75B6" stroke="#2E75B6" stroke-width="0.08" stroke-opacity="0.7" xml:space="preserve">"applicationUrl"</text>
<text x="262.26 269.59" y="459.25" font-family="Liberation Mono" font-size="13" fill="#000000" stroke="#000000" stroke-width="0.08" stroke-opacity="0.7" xml:space="preserve">: </text>
<text x="276.92" y="459.25" font-family="Liberation Mono" font-size="13" fill="#A31515" stroke="#A31515" stroke-width="0.08" stroke-opacity="0.7" xml:space="preserve">"</text>
<text x="284.25 291.58 298.91 306.24 313.57 320.90 328.23 335.56 342.89 350.22 357.55 364.88 372.21 379.54 386.87 394.20 401.53 408.86 416.19 423.52 430.85" y="459.25" font-family="Liberation Mono" font-size="13" fill="#0000FF" stroke="#0000FF" stroke-width="0.08" stroke-opacity="0.7" xml:space="preserve">http://localhost:5000</text>
<rect x="284.25" y="460.85" width="153.93" height="1" fill="#0000FF"/>
<text x="438.18" y="459.25" font-family="Liberation Mono" font-size="13" fill="#A31515" stroke="#A31515" stroke-width="0.08" stroke-opacity="0.7" xml:space="preserve">"</text>
<text x="56.20 63.53" y="475.70" font-family="Liberation Mono" font-size="13" fill="#2B91AF" stroke="#2B91AF" stroke-width="0.32" stroke-opacity="0.75">37</text>
<text x="130.32" y="475.70" font-family="Liberation Mono" font-size="13" fill="#000000" stroke="#000000" stroke-width="0.08" stroke-opacity="0.7" xml:space="preserve">}</text>
<text x="56.20 63.53" y="492.15" font-family="Liberation Mono" font-size="13" fill="#2B91AF" stroke="#2B91AF" stroke-width="0.32" stroke-opacity="0.75">38</text>
<text x="115.66" y="492.15" font-family="Liberation Mono" font-size="13" fill="#000000" stroke="#000000" stroke-width="0.08" stroke-opacity="0.7" xml:space="preserve">}</text>
<text x="56.20 63.53" y="508.60" font-family="Liberation Mono" font-size="13" fill="#2B91AF" stroke="#2B91AF" stroke-width="0.32" stroke-opacity="0.75">39</text>
<text x="101.00" y="508.60" font-family="Liberation Mono" font-size="13" fill="#000000" stroke="#000000" stroke-width="0.08" stroke-opacity="0.7" xml:space="preserve">}</text>
<circle cx="77.65" cy="468.025" r="2.95" fill="#FFE7A0" stroke="#F2AE2A" stroke-width="1.5"/><path d="M76.9 468.32499999999993 v2.4 M78.4 468.32499999999993 v2.4" stroke="#F5C55A" stroke-width="0.6"/><rect x="76.2" y="471.525" width="2.9" height="1.6" fill="#D9BE7C"/><rect x="76.4" y="473.12499999999994" width="2.5" height="2.6" fill="#B4B9CC"/>
<filter id="sh" x="-10%" y="-10%" width="120%" height="120%"><feGaussianBlur stdDeviation="1.2"/></filter>
<filter id="sh3" x="-10%" y="-10%" width="120%" height="120%"><feGaussianBlur stdDeviation="0.9"/></filter>
<rect x="118.8" y="331.4" width="353.7" height="157.4" rx="19" ry="19" fill="none" stroke="#8A8A8A" stroke-opacity="0.6" stroke-width="2.6" filter="url(#sh3)"/>
<rect x="117.3" y="328.8" width="353.7" height="157.3" rx="19" ry="19" fill="none" stroke="#F4A30E" stroke-width="2.3"/>
<filter id="sh2" x="-10%" y="-10%" width="125%" height="125%"><feGaussianBlur stdDeviation="0.45"/></filter>
<rect x="276.5" y="38.5" width="147.3" height="126.2" fill="#8A91A3" filter="url(#sh2)"/>
<rect x="273.2" y="35.2" width="149.2" height="128.2" fill="#E8EBFA"/>
<rect x="273.7" y="35.7" width="148.2" height="127.2" fill="none" stroke="#D8DEF0" stroke-width="0.9"/>
<path d="M279 40.7 L284.4 44 L279 47.3 Z" fill="#388A34"/>
<rect x="291" y="51.2" width="129" height="0.9" fill="#CDD3E6"/>
<rect x="291" y="106.5" width="129" height="0.9" fill="#CDD3E6"/>
<rect x="291" y="148.3" width="129" height="0.9" fill="#CDD3E6"/>
<rect x="276.5" y="54.3" width="10.2" height="10.6" fill="#D5DBEE"/>
<path d="M278.8 59.6 L280.9 62 L284.6 56.5" fill="none" stroke="#1E1E1E" stroke-width="1.3"/>
<text x="293.4" y="46.7" font-family="Liberation Sans" font-size="7.7" fill="#1E1E1E" stroke="#1E1E1E" stroke-width="0.18" stroke-opacity="0.6" textLength="31.9" lengthAdjust="spacingAndGlyphs" >IIS Express</text>
<text x="293.4" y="62.5" font-family="Liberation Sans" font-size="7.7" fill="#1E1E1E" stroke="#1E1E1E" stroke-width="0.18" stroke-opacity="0.6" textLength="31.9" lengthAdjust="spacingAndGlyphs" >IIS Express</text>
<text x="293.4" y="75.3" font-family="Liberation Sans" font-size="7.7" fill="#1E1E1E" stroke="#1E1E1E" stroke-width="0.18" stroke-opacity="0.6" textLength="80" lengthAdjust="spacingAndGlyphs" >EnvironmentsDotNetCore</text>
<text x="293.4" y="87.9" font-family="Liberation Sans" font-size="7.7" fill="#1E1E1E" stroke="#1E1E1E" stroke-width="0.18" stroke-opacity="0.6" textLength="53.9" lengthAdjust="spacingAndGlyphs" >Azure Dev Spaces</text>
<text x="293.4" y="101.4" font-family="Liberation Sans" font-size="7.7" fill="#1E1E1E" stroke="#1E1E1E" stroke-width="0.18" stroke-opacity="0.6" textLength="55.5" lengthAdjust="spacingAndGlyphs" >RegressionTesting</text>
<text x="293.4" y="117.4" font-family="Liberation Sans" font-size="7.7" fill="#1E1E1E" stroke="#1E1E1E" stroke-width="0.18" stroke-opacity="0.6" textLength="94.4" lengthAdjust="spacingAndGlyphs" >Web Browser (Microsoft Edge)</text>
<text x="293.4" y="130.1" font-family="Liberation Sans" font-size="7.7" fill="#1E1E1E" stroke="#1E1E1E" stroke-width="0.18" stroke-opacity="0.6" textLength="86.8" lengthAdjust="spacingAndGlyphs" >Script Debugging (Disabled)</text>
<text x="293.4" y="142.9" font-family="Liberation Sans" font-size="7.7" fill="#1E1E1E" stroke="#1E1E1E" stroke-width="0.18" stroke-opacity="0.6" textLength="44.2" lengthAdjust="spacingAndGlyphs" >Browse With...</text>
<text x="293.4" y="158.9" font-family="Liberation Sans" font-size="7.7" fill="#1E1E1E" stroke="#1E1E1E" stroke-width="0.18" stroke-opacity="0.6" textLength="54.7" lengthAdjust="spacingAndGlyphs" >More Emulators...</text>
<path d="M413.2 112.5 L416 114.5 L413.2 116.5 Z" fill="#1E1E1E"/>
<path d="M413.2 125.5 L416 127.5 L413.2 129.5 Z" fill="#1E1E1E"/>
<rect x="278.6" y="93.4" width="104" height="13.8" rx="2.5" fill="none" stroke="#7D8294" stroke-opacity="0.55" stroke-width="2" filter="url(#sh)" transform="translate(0.4,0.6)"/>
<rect x="277.2" y="91.3" width="104.6" height="15.2" rx="2.8" fill="none" stroke="#F4A30E" stroke-width="1.9"/>
<rect x="0" y="0" width="628" height="2" fill="#fff"/><rect x="0" y="0" width="2" height="524" fill="#fff"/><rect x="626" y="0" width="2" height="524" fill="#fff"/><rect x="0" y="521.7" width="628" height="2.3" fill="#fff"/>
</svg>
</body></html>
